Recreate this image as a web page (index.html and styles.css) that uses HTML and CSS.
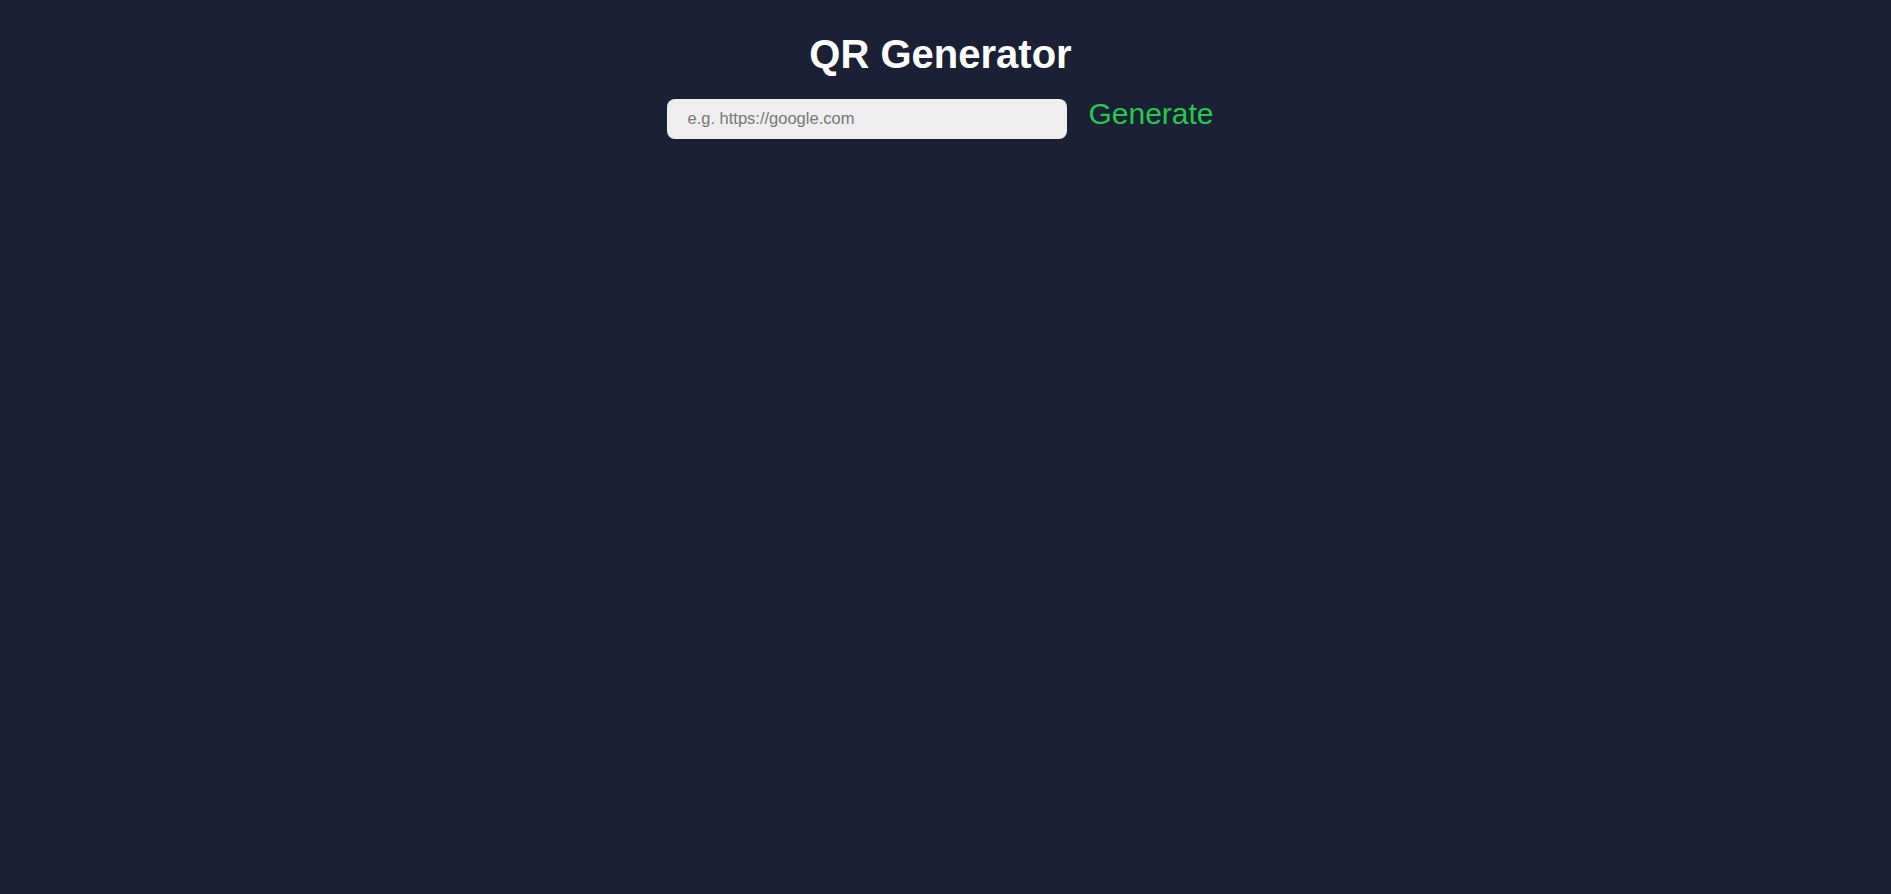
FILE: index.html
```html
<!DOCTYPE html>
<html lang="en">
<head>
<meta charset="utf-8">
<title>QR Generator</title>
<link rel="stylesheet" href="styles.css">
</head>
<body>
<main class="app">
  <h1 class="title">QR Generator</h1>
  <form class="form" onsubmit="return false;">
    <input class="url-input" type="text" placeholder="e.g. https://google.com">
    <button class="generate-btn" type="submit">Generate</button>
  </form>
</main>
</body>
</html>
```
FILE: styles.css
```css
html, body {
  margin: 0;
  padding: 0;
  height: 100%;
}
body {
  background: #1b2034;
  font-family: "Liberation Sans", Arial, sans-serif;
  color: #ffffff;
}
.app {
  display: flex;
  flex-direction: column;
  align-items: center;
  padding: 32px 10px 0 0;
}
.title {
  margin: 0;
  font-size: 40px;
  font-weight: 700;
  color: #ffffff;
}
.form {
  display: flex;
  align-items: baseline;
  gap: 21px;
  margin-top: 20px;
}
.url-input {
  box-sizing: border-box;
  width: 400px;
  height: 40px;
  padding: 0 20px;
  border: none;
  border-radius: 8px;
  background: #eeeeee;
  font-family: "Liberation Sans", Arial, sans-serif;
  font-size: 16.5px;
  color: #333;
  outline: none;
}
.url-input::placeholder {
  color: #777777;
}
.generate-btn {
  background: none;
  border: none;
  padding: 0;
  font-family: "Liberation Sans", Arial, sans-serif;
  font-size: 30px;
  color: #24c94d;
  cursor: pointer;
}
```
